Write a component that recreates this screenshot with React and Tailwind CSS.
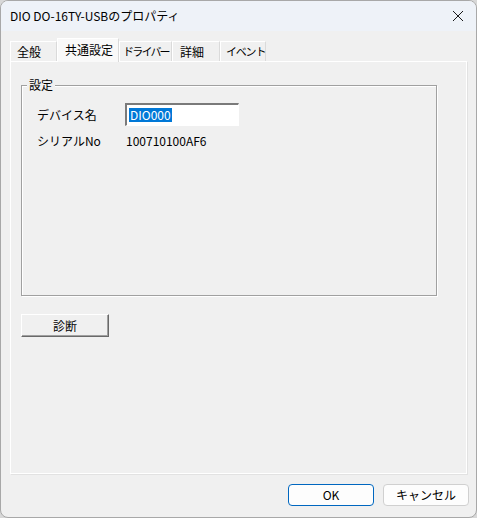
import React from 'react';

const font = { fontFamily: '"Noto Sans CJK JP", "Liberation Sans", sans-serif' };

const tabs = [
  { label: '全般', w: 'w-[47px] pl-[6px] text-[12px]' },
  { label: '共通設定', w: 'w-[62px] pl-[7px] text-[12px]', active: true },
  { label: 'ドライバー', w: 'w-[53px] pl-[3px] text-[11px] tracking-[-1.8px]' },
  { label: '詳細', w: 'w-[48px] pl-[7px] text-[12px]' },
  { label: 'イベント', w: 'w-[46px] pl-[5px] text-[11px] tracking-[-1.2px]' },
];

const Tab = ({ label, w, active }) => (
  <div
    className={`${w} flex items-center justify-start whitespace-nowrap text-black border-t border-l border-r ${
      active
        ? 'h-[24px] pb-[1px] bg-[#f9f9f9] border-t-white border-l-white border-r-[#d9d9d9] -mb-px relative z-10'
        : 'h-[20px] bg-[#f0f0f0] border-t-white border-l-white border-r-[#dadada]'
    }`}
  >
    {label}
  </div>
);

const DialogButton = ({ children, primary }) => (
  <button
    className={`w-[86px] h-[22px] rounded-[4px] bg-[#fdfdfd] text-[12px] text-black flex items-center justify-center border ${
      primary ? 'border-[#0067c0]' : 'border-[#d0d0d0]'
    }`}
  >
    {children}
  </button>
);

export default function App() {
  return (
    <div className="w-[477px] h-[518px] bg-[#d8d8d8]" style={font}>
      <div className="w-[477px] h-[518px] bg-[#f0f0f0] flex flex-col rounded-[8px] border border-[#a8a8a8] overflow-hidden">
        {/* title bar */}
        <div className="h-[30px] shrink-0 bg-[#eef2f8] flex items-center justify-between pl-[9px] pr-[10px]">
          <span className="text-[12px] text-black">DIO DO-16TY-USBのプロパティ</span>
          <svg width="12" height="12" viewBox="0 0 12 12" className="mr-[2px]">
            <path d="M1 1 L11 11 M11 1 L1 11" stroke="#1a1a1a" strokeWidth="1" fill="none" />
          </svg>
        </div>

        <div className="flex-1 flex flex-col pl-[9px] pr-[7px]">
          {/* tabs */}
          <div className="h-[30px] shrink-0 flex items-end">
            {tabs.map((t) => (
              <Tab key={t.label} {...t} />
            ))}
          </div>

          {/* tab panel */}
          <div className="w-[457px] h-[413px] shrink-0 border border-white shadow-[1px_1px_0_#e2e2e2] bg-[#f0f0f0] pl-[10px] pt-[23px]">
            {/* group box */}
            <div className="w-[416px] h-[211px] border border-[#a0a0a0] shadow-[1px_1px_0_#ffffff,inset_1px_1px_0_#ffffff] relative">
              <span className="absolute -top-[9px] left-[5px] px-[2px] bg-[#f0f0f0] text-[12px] leading-[16px] text-black">
                設定
              </span>
              <div className="pl-[15px] pt-[17px] flex flex-col text-[12px] text-black">
                <div className="flex items-center h-[23px]">
                  <span className="w-[88px]">デバイス名</span>
                  <div className="w-[114px] h-[23px] border-t-2 border-l-2 border-t-[#7a7a7a] border-l-[#7a7a7a] border-b border-r border-b-white border-r-white bg-white flex items-center pl-[2px]">
                    <span className="bg-[#0078d7] text-white leading-[14px] px-[1px]">DIO000</span>
                  </div>
                </div>
                <div className="flex items-center h-[24px] mt-[3px]">
                  <span className="w-[89px]">シリアルNo</span>
                  <span>100710100AF6</span>
                </div>
              </div>
            </div>

            {/* diagnose button */}
            <button className="mt-[18px] w-[88px] h-[23px] bg-[#f0f0f0] border border-t-white border-l-white border-b-[#696969] border-r-[#696969] shadow-[inset_-1px_-1px_0_#a0a0a0] text-[12px] text-black flex items-center justify-center">
              診断
            </button>
          </div>

          {/* dialog buttons */}
          <div className="flex justify-end gap-[9px] pt-[10px]">
            <DialogButton primary>OK</DialogButton>
            <DialogButton>キャンセル</DialogButton>
          </div>
        </div>
      </div>
    </div>
  );
}
